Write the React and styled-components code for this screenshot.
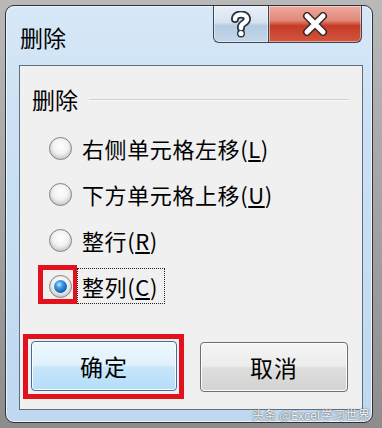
import React from 'react';
import styled, {createGlobalStyle} from 'styled-components';

const GlobalStyle = createGlobalStyle`
    html, body {
        margin: 0;
        padding: 0;
        background: #9a9a9a;
    }
    body {
        font-family: "Noto Sans CJK SC", "Noto Sans", sans-serif;
    }
`;

const Page = styled.div`
    width: 382px;
    height: 428px;
    padding: 5px 9px 5px 5px;
    box-sizing: border-box;
    background: linear-gradient(180deg, #b9b9b9 0%, #8d8d8d 100%);
`;

const Frame = styled.div`
    position: relative;
    height: 418px;
    box-sizing: border-box;
    border: 1px solid #2f3338;
    border-radius: 9px;
    background: linear-gradient(180deg, #d7e8f7 0%, #cbe0f4 30%, #bfd8f0 100%);
    box-shadow: inset 0 0 0 1px #eef6fd;
    display: flex;
    flex-direction: column;
`;

const TitleBar = styled.div`
    height: 59px;
    display: flex;
    justify-content: space-between;
    align-items: flex-start;
    padding: 0 10px 0 14px;
`;

const Title = styled.div`
    margin-top: 18px;
    font-size: 23px;
    line-height: 26px;
    color: #000;
`;

const Caption = styled.div`
    display: flex;
`;

const CaptionButton = styled.div`
    height: 37px;
    width: ${p => p.$w}px;
    box-sizing: border-box;
    border: 1px solid #3d4650;
    border-top: none;
    display: flex;
    align-items: center;
    justify-content: center;
    background: ${p => p.$close
        ? 'linear-gradient(180deg, #eeaaa0 0%, #e08877 40%, #c63b27 55%, #d2563f 100%)'
        : 'linear-gradient(180deg, #e9f1f9 0%, #d5e3f0 45%, #b4cbe2 55%, #c3d7ea 100%)'};
    border-radius: ${p => p.$close ? '0 0 6px 0' : '0 0 0 6px'};
    border-left: ${p => p.$close ? 'none' : '1px solid #3d4650'};
    box-shadow: inset 0 0 0 1px rgba(255, 255, 255, 0.45);
`;

const Panel = styled.div`
    flex: 1;
    margin: 0 9px 12px 13px;
    border: 1px solid #5e6e7d;
    background: #f0f0f0;
    padding: 20px 14px 17px 11px;
    display: flex;
    flex-direction: column;
`;

const GroupHeading = styled.div`
    display: flex;
    align-items: center;
    padding-left: 1px;
    height: 26px;
    font-size: 23px;
    color: #000;
    &::after {
        content: '';
        flex: 1;
        height: 1px;
        margin: 2px 0 0 11px;
        background: #c9d2d9;
        border-bottom: 1px solid #fbfbfb;
    }
`;

const OptionList = styled.div`
    margin-top: 13px;
    padding-left: 18px;
    display: flex;
    flex-direction: column;
`;

const OptionRow = styled.div`
    height: 46px;
    display: flex;
    align-items: center;
`;

const RadioWrap = styled.span`
    position: relative;
    display: flex;
    width: 23px;
    height: 23px;
    &::before {
        content: '';
        display: ${p => p.$marked ? 'block' : 'none'};
        position: absolute;
        left: -11px;
        top: -10px;
        width: 39px;
        height: 39px;
        box-sizing: border-box;
        border: 5px solid #e2111c;
        border-right-width: 4px;
    }
`;

const Radio = styled.span`
    width: 23px;
    height: 23px;
    box-sizing: border-box;
    border-radius: 50%;
    border: 1px solid #7f8388;
    background: radial-gradient(circle at 50% 40%, #ffffff 0%, #f2f2f2 45%, #c9cbcd 75%, #eaeaea 100%);
    display: flex;
    align-items: center;
    justify-content: center;
    position: relative;
    z-index: 1;
`;

const Dot = styled.span`
    width: 13px;
    height: 13px;
    border-radius: 50%;
    background: radial-gradient(circle at 40% 35%, #bfe6ff 0%, #3d9be6 30%, #0d5fb2 70%, #0a3f7a 100%);
`;

const Label = styled.span`
    margin-left: ${p => p.$focused ? '5px' : '10px'};
    padding: ${p => p.$focused ? '3px 6px 3px 4px' : '0'};
    border: ${p => p.$focused ? '1px dotted #222' : 'none'};
    font-size: 22px;
    line-height: 28px;
    color: #000;
    white-space: nowrap;
    letter-spacing: 0.6px;
    u {
        text-decoration: underline;
        text-underline-offset: 2px;
    }
`;

const ButtonRow = styled.div`
    margin-top: auto;
    display: flex;
    justify-content: space-between;
    align-items: center;
`;

const Marker = styled.div`
    margin: -7px 0 -7px -8px;
    padding: 2px 2px 3px 3px;
    border: 5px solid #e2111c;
    display: flex;
`;

const Button = styled.button`
    width: ${p => p.$w}px;
    height: 50px;
    box-sizing: border-box;
    border-radius: 4px;
    font-family: "Noto Sans CJK SC", "Noto Sans", sans-serif;
    font-size: 23px;
    color: #000;
    letter-spacing: 1px;
    padding: 0;
    border: 1px solid ${p => p.$primary ? '#3c6f9a' : '#6f6f6f'};
    background: ${p => p.$primary
        ? 'linear-gradient(180deg, #eef8fe 0%, #e0f1fc 48%, #c6e6fb 52%, #b4ddf8 100%)'
        : 'linear-gradient(180deg, #f5f5f5 0%, #ececec 48%, #dedede 52%, #d2d2d2 100%)'};
    box-shadow: inset 0 0 0 1px #fcfcfc;
`;

const Watermark = styled.div`
    position: absolute;
    right: 2px;
    bottom: 0px;
    font-size: 12px;
    line-height: 14px;
    color: #f4f6f8;
    text-shadow: 0 0 1px #555, 0 0 2px #777;
    letter-spacing: 0.3px;
`;

const HelpIcon = () => (
    <svg width="22" height="27" viewBox="0 0 22 27">
        <path d="M5 8 C5 2 17 2 17 8 C17 12 11 12 11 16 L11 17"
              fill="none" stroke="#2a3540" strokeWidth="8" strokeLinecap="round"/>
        <circle cx="11" cy="22.5" r="4" fill="#2a3540"/>
        <path d="M5 8 C5 2 17 2 17 8 C17 12 11 12 11 16 L11 17"
              fill="none" stroke="#fff" strokeWidth="4.5" strokeLinecap="round"/>
        <circle cx="11" cy="22.5" r="2.6" fill="#fff"/>
    </svg>
);

const CloseIcon = () => (
    <svg width="30" height="24" viewBox="0 0 30 24">
        <path d="M7 4 L23 20 M23 4 L7 20" stroke="#3a2a28" strokeWidth="8" strokeLinecap="round"/>
        <path d="M7 4 L23 20 M23 4 L7 20" stroke="#fff" strokeWidth="5" strokeLinecap="round"/>
    </svg>
);

const options = [
    {text: '右侧单元格左移', key: 'L'},
    {text: '下方单元格上移', key: 'U'},
    {text: '整行', key: 'R'},
    {text: '整列', key: 'C', checked: true},
];

const App = () => {
    return (
        <Page>
            <GlobalStyle/>
            <Frame>
                <TitleBar>
                    <Title>删除</Title>
                    <Caption>
                        <CaptionButton $w={56}><HelpIcon/></CaptionButton>
                        <CaptionButton $w={93} $close><CloseIcon/></CaptionButton>
                    </Caption>
                </TitleBar>

                <Panel>
                    <GroupHeading>删除</GroupHeading>

                    <OptionList>
                        {options.map(o => (
                            <OptionRow key={o.key}>
                                <RadioWrap $marked={o.checked}>
                                    <Radio>{o.checked && <Dot/>}</Radio>
                                </RadioWrap>
                                <Label $focused={o.checked}>
                                    {o.text}(<u>{o.key}</u>)
                                </Label>
                            </OptionRow>
                        ))}
                    </OptionList>

                    <ButtonRow>
                        <Marker>
                            <Button $w={146} $primary>确定</Button>
                        </Marker>
                        <Button $w={148}>取消</Button>
                    </ButtonRow>
                </Panel>

                <Watermark>头条 @Excel学习世界</Watermark>
            </Frame>
        </Page>
    );
};

export default App;
